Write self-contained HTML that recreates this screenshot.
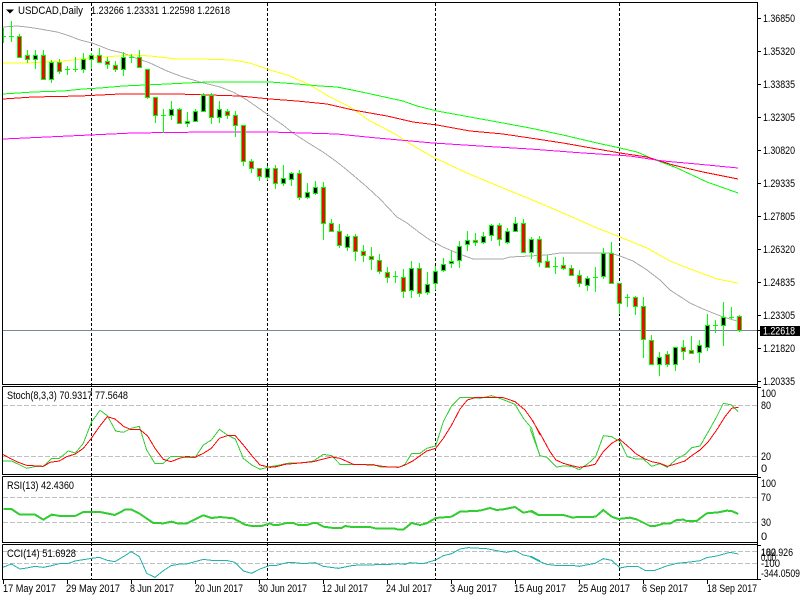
<!DOCTYPE html>
<html><head><meta charset="utf-8"><title>USDCAD,Daily</title>
<style>
html,body{margin:0;padding:0;background:#fff;width:800px;height:600px;overflow:hidden}
svg{display:block;position:absolute;left:0;top:0}
text{font-family:"Liberation Sans",sans-serif;font-size:11px;fill:#000}
.c{shape-rendering:crispEdges;fill:none}
</style></head><body>
<svg width="800" height="600" viewBox="0 0 800 600" xmlns="http://www.w3.org/2000/svg">
<rect width="800" height="600" fill="#fff"/>

<!-- level lines -->
<path class="c" stroke="#c0c0c0" stroke-dasharray="5 2" d="M3 405.5H757M3 456.5H757M3 497.5H757M3 522.5H757M3 551.5H757M3 563.5H757"/>
<!-- period separators -->
<path class="c" stroke="#000" stroke-dasharray="3 2" d="M91.5 3V579M267.5 3V579M435.5 3V579M619.5 3V579"/>
<!-- price line -->
<path class="c" stroke="#778899" d="M3 330.5H757"/>

<!-- moving averages -->
<polyline class="c" stroke="#a9a9a9" points="3,27 17,26 27,27 40,29 57,32 67,35 80,40 92,43 100,46 110,50 123,53 133,57 150,63 167,71 183,77 200,82 220,87 233,92 247,100 267,114 283,125 293,133 310,144 323,152 337,162 347,170 367,187 380,199 397,217 407,223 420,233 430,240 443,247 457,253 473,259 503,259 510,257 530,256 547,255 560,253 610,253 620,256 633,261 647,270 660,280 670,290 690,303 703,309 723,317 737,321"/>
<polyline class="c" stroke="#ffff00" points="3,63 27,63 63,61 90,58 117,56 133,55 150,56 177,59 200,59 233,60 250,63 270,70 290,76 310,85 330,97 350,107 370,121 397,135 407,142 433,157 467,173 503,188 530,199 563,213 597,228 620,237 647,248 670,261 690,269 717,279 738,283"/>
<polyline class="c" stroke="#00ff00" stroke-width="1" points="3,94 33,92 63,91 83,89 100,88 123,86 167,84 207,82 270,82 297,84 320,86 337,87 357,91 380,96 403,101 417,106 437,111 470,117 503,123 530,128 563,135 597,143 620,148 637,152 653,159 677,168 707,182 738,193"/>
<polyline class="c" stroke="#ff0000" stroke-width="1" points="3,99 33,97 80,96 120,94 177,94 240,96 270,99 297,101 327,104 353,110 387,116 413,122 437,125 470,131 503,134 530,138 563,143 597,149 620,153 647,157 673,165 703,172 738,179"/>
<polyline class="c" stroke="#ff00ff" stroke-width="1" points="3,139 47,137 90,135 133,133 207,132 270,132 337,134 377,138 433,143 480,146 530,149 583,153 630,156 663,161 697,164 738,168"/>

<!-- wicks -->
<path class="c" stroke="#00ff00" d="M3.5 28V43M11.5 21V42M19.5 34V57M27.5 50V63M35.5 50V69M43.5 50V80M51.5 60V83M59.5 59V74M67.5 66V75M75.5 57V72M83.5 53V73M91.5 53V69M99.5 48V63M107.5 57V69M115.5 61V72M123.5 52V76M131.5 54V63M139.5 50V68M147.5 69V99M155.5 97V123M163.5 109V133M171.5 101V120M179.5 108V123M187.5 112V127M195.5 109V122M203.5 93V112M211.5 93V124M219.5 101V123M227.5 109V119M235.5 111V137M243.5 125V166M251.5 159V173M259.5 168V181M267.5 166V180M275.5 165V189M283.5 165V186M291.5 172V186M299.5 170V200M307.5 183V199M315.5 181V195M323.5 182V240M331.5 219V231M339.5 224V248M347.5 234V251M355.5 234V261M363.5 245V262M371.5 247V270M379.5 254V274M387.5 267V283M395.5 271V283M403.5 269V298M411.5 261V298M419.5 263V297M427.5 272V295M435.5 266V290M443.5 258V272M451.5 251V268M459.5 241V268M467.5 231V251M475.5 233V246M483.5 232V244M491.5 224V241M499.5 223V246M507.5 228V244M515.5 217V232M523.5 219V253M531.5 237V259M539.5 236V267M547.5 255V267M555.5 257V274M563.5 257V270M571.5 265V276M579.5 270V287M587.5 276V291M595.5 267V292M603.5 248V279M611.5 242V283M619.5 283V314M627.5 294V307M635.5 296V315M643.5 297V358M651.5 335V365M659.5 352V376M667.5 351V367M675.5 347V371M683.5 340V360M691.5 336V353M699.5 340V363M707.5 314V351M715.5 320V333M723.5 302V346M731.5 307V319M739.5 315V332"/>
<!-- doji ticks -->
<path class="c" stroke="#00ff00" d="M3 36.5H6M9 36.5H14M65 69.5H70M73 69.5H78M129 57.5H134M161 115.5H166M393 276.5H398M553 266.5H558M593 277.5H598M625 297.5H630M713 325.5H718M729 317.5H734"/>
<!-- black bodies -->
<path class="c" style="fill:#000" stroke="#00ff00" d="M33.5 55.5h4V59.5h-4zM49.5 62.5h4V79.5h-4zM81.5 59.5h4V69.5h-4zM89.5 55.5h4V59.5h-4zM121.5 57.5h4V69.5h-4zM169.5 109.5h4V115.5h-4zM185.5 121.5h4V123.5h-4zM193.5 111.5h4V121.5h-4zM201.5 95.5h4V111.5h-4zM217.5 109.5h4V117.5h-4zM265.5 168.5h4V177.5h-4zM281.5 178.5h4V183.5h-4zM289.5 173.5h4V179.5h-4zM305.5 192.5h4V197.5h-4zM313.5 187.5h4V193.5h-4zM345.5 236.5h4V247.5h-4zM409.5 268.5h4V290.5h-4zM425.5 284.5h4V292.5h-4zM433.5 271.5h4V283.5h-4zM441.5 264.5h4V270.5h-4zM449.5 261.5h4V263.5h-4zM457.5 246.5h4V260.5h-4zM465.5 240.5h4V244.5h-4zM481.5 236.5h4V242.5h-4zM489.5 225.5h4V235.5h-4zM505.5 231.5h4V242.5h-4zM513.5 223.5h4V231.5h-4zM529.5 239.5h4V252.5h-4zM585.5 278.5h4V285.5h-4zM601.5 253.5h4V276.5h-4zM657.5 357.5h4V364.5h-4zM673.5 347.5h4V364.5h-4zM697.5 345.5h4V352.5h-4zM705.5 325.5h4V347.5h-4zM721.5 317.5h4V325.5h-4z"/>
<!-- red bodies -->
<path class="c" style="fill:#f00" stroke="#00ff00" d="M17.5 36.5h4V57.5h-4zM25.5 55.5h4V59.5h-4zM41.5 55.5h4V79.5h-4zM57.5 62.5h4V71.5h-4zM97.5 55.5h4V62.5h-4zM105.5 61.5h4V64.5h-4zM113.5 65.5h4V69.5h-4zM137.5 57.5h4V67.5h-4zM145.5 69.5h4V97.5h-4zM153.5 97.5h4V115.5h-4zM177.5 109.5h4V123.5h-4zM209.5 95.5h4V117.5h-4zM225.5 111.5h4V115.5h-4zM233.5 115.5h4V125.5h-4zM241.5 125.5h4V161.5h-4zM249.5 161.5h4V168.5h-4zM257.5 168.5h4V176.5h-4zM273.5 168.5h4V183.5h-4zM297.5 173.5h4V197.5h-4zM321.5 187.5h4V223.5h-4zM329.5 223.5h4V231.5h-4zM337.5 231.5h4V245.5h-4zM353.5 236.5h4V251.5h-4zM361.5 251.5h4V255.5h-4zM369.5 256.5h4V259.5h-4zM377.5 260.5h4V271.5h-4zM385.5 272.5h4V277.5h-4zM401.5 277.5h4V291.5h-4zM417.5 268.5h4V293.5h-4zM473.5 240.5h4V242.5h-4zM497.5 225.5h4V239.5h-4zM521.5 223.5h4V252.5h-4zM537.5 239.5h4V262.5h-4zM545.5 261.5h4V267.5h-4zM561.5 265.5h4V268.5h-4zM569.5 268.5h4V275.5h-4zM577.5 275.5h4V283.5h-4zM609.5 253.5h4V283.5h-4zM617.5 283.5h4V303.5h-4zM633.5 297.5h4V306.5h-4zM641.5 306.5h4V339.5h-4zM649.5 340.5h4V364.5h-4zM665.5 354.5h4V364.5h-4zM681.5 347.5h4V351.5h-4zM689.5 350.5h4V353.5h-4zM737.5 316.5h4V330.5h-4z"/>

<!-- indicators: left -->
<g transform="translate(0 385) scale(.33333)">
<polyline class="c" stroke="#32cd32" stroke-width="3" points="8,228 35,228 60,240 80,250 105,245 130,244 155,220 178,220 205,198 226,204 250,175 275,110 300,76 322,92 347,138 370,142 394,130 418,124 440,195 465,236 490,235 513,214 540,214 560,218 585,218 610,180 634,165 658,133 682,150 706,162 730,220 755,240 780,253 810,245"/>
<polyline class="c" stroke="#ff0000" stroke-width="3" points="8,208 30,220 55,232 80,241 130,244 150,232 178,228 200,215 226,207 250,190 274,160 298,125 322,95 345,102 372,125 394,134 420,134 443,153 465,190 490,223 513,230 538,220 560,214 585,217 610,205 634,190 658,160 682,152 705,151 730,180 754,210 780,240 810,247"/>
<polyline class="c" stroke="#32cd32" stroke-width="6" points="10,372 34,372 58,388 105,389 130,404 155,389 180,393 225,393 250,381 300,381 345,390 375,374 395,374 420,387 460,414 490,415 515,410 535,416 560,416 610,391 635,399 660,396 700,400 735,419 755,423 785,423 810,415"/>
<polyline class="c" stroke="#20b2aa" stroke-width="3" points="8,547 34,537 60,552 80,549 105,544 130,547 155,542 178,536 205,535 225,528 250,524 275,520 298,517 322,526 345,530 370,515 394,500 418,515 440,565 465,577 490,557 513,542 540,537 560,537 585,530 610,523 634,526 682,527 705,532 730,558 755,565 780,552 810,541"/>
</g>
<!-- indicators: middle -->
<g transform="translate(270 385) scale(.33333)">
<polyline class="c" stroke="#32cd32" stroke-width="3" points="0,245 30,240 50,235 100,233 130,228 160,208 185,212 210,238 270,238 310,238 330,246 390,246 405,238 425,205 450,205 470,190 497,183 520,110 545,62 570,37 605,37 630,40 665,32 695,42 735,58 760,100 785,130 810,215"/>
<polyline class="c" stroke="#ff0000" stroke-width="3" points="0,247 20,245 45,238 100,233 130,230 160,222 185,216 210,220 250,238 310,240 345,245 385,247 405,240 430,227 470,198 497,190 520,160 545,120 570,72 592,45 615,38 670,37 700,38 735,50 765,75 790,110 810,150"/>
<polyline class="c" stroke="#32cd32" stroke-width="6" points="0,415 10,420 25,420 50,414 70,414 85,420 110,420 130,414 140,414 160,425 190,429 215,429 225,423 245,426 300,426 320,431 375,431 385,434 400,434 425,414 450,420 470,415 497,399 545,395 570,380 630,377 660,369 680,375 700,373 735,366 760,383 785,378 810,392"/>
<polyline class="c" stroke="#20b2aa" stroke-width="3" points="0,541 20,541 50,533 75,533 100,536 135,533 160,544 205,550 250,541 360,538 385,536 405,538 420,533 460,536 497,525 520,512 545,506 570,492 595,488 650,491 680,497 710,502 735,497 760,510 785,515 810,527"/>
</g>
<!-- indicators: right -->
<g transform="translate(530 385) scale(.33333)">
<polyline class="c" stroke="#32cd32" stroke-width="3" points="0,130 30,212 50,217 80,246 100,243 125,244 148,254 175,235 197,215 220,152 245,155 270,170 292,215 318,222 340,222 365,244 390,236 412,247 440,222 465,208 485,188 510,183 535,140 560,95 580,55 605,60 625,80"/>
<polyline class="c" stroke="#ff0000" stroke-width="3" points="0,95 30,145 60,200 78,225 100,235 125,242 148,247 175,243 195,238 220,200 245,175 268,162 295,185 320,208 345,222 365,230 390,235 412,244 440,236 465,228 485,212 510,195 535,170 560,135 585,95 605,70 625,67"/>
<polyline class="c" stroke="#32cd32" stroke-width="6" points="0,378 25,390 100,390 125,397 175,396 197,395 220,375 245,395 265,402 300,398 320,403 360,423 375,423 400,416 420,416 440,405 460,404 470,408 500,408 530,385 565,382 590,377 605,378 625,387"/>
<polyline class="c" stroke="#20b2aa" stroke-width="3" points="0,515 25,528 50,538 75,541 125,541 148,544 195,535 220,521 245,526 270,549 290,545 325,545 345,556 375,556 410,543 440,535 480,531 510,527 530,518 560,513 600,502 625,507"/>
</g>

<!-- frames -->
<path class="c" stroke="#000" d="M2.5 2.5H757.5V580M2.5 2.5V384.5H757.5M2.5 386.5H757.5M2.5 386.5V474.5H757.5M2.5 476.5H757.5M2.5 476.5V542.5H757.5M2.5 544.5H757.5M2.5 544.5V579.5H757.5"/>
<!-- right ticks -->
<path class="c" stroke="#000" d="M757 18.5H761M757 51.5H761M757 84.5H761M757 117.5H761M757 150.5H761M757 183.5H761M757 216.5H761M757 249.5H761M757 282.5H761M757 315.5H761M757 348.5H761M757 381.5H761M757 330.5H761M757 387.5H761M757 477.5H761M757 545.5H761M757 579.5H761"/>
<!-- bottom ticks -->
<path class="c" stroke="#000" d="M3.5 580V584M67.5 580V584M131.5 580V584M195.5 580V584M259.5 580V584M323.5 580V584M387.5 580V584M451.5 580V584M515.5 580V584M579.5 580V584M643.5 580V584M707.5 580V584"/>

<!-- title -->
<path d="M6 9.5H14L10 13.5Z" fill="#000"/>
<text x="18" y="14" textLength="65" lengthAdjust="spacingAndGlyphs">USDCAD,Daily</text>
<text x="91" y="14" textLength="139" lengthAdjust="spacingAndGlyphs" xml:space="preserve">1.23266 1.23331 1.22598 1.22618</text>

<!-- price axis -->
<g>
<text x="763" y="22" textLength="32" lengthAdjust="spacingAndGlyphs">1.36850</text>
<text x="763" y="55" textLength="32" lengthAdjust="spacingAndGlyphs">1.35320</text>
<text x="763" y="88" textLength="32" lengthAdjust="spacingAndGlyphs">1.33835</text>
<text x="763" y="121" textLength="32" lengthAdjust="spacingAndGlyphs">1.32305</text>
<text x="763" y="154" textLength="32" lengthAdjust="spacingAndGlyphs">1.30820</text>
<text x="763" y="187" textLength="32" lengthAdjust="spacingAndGlyphs">1.29335</text>
<text x="763" y="220" textLength="32" lengthAdjust="spacingAndGlyphs">1.27805</text>
<text x="763" y="253" textLength="32" lengthAdjust="spacingAndGlyphs">1.26320</text>
<text x="763" y="286" textLength="32" lengthAdjust="spacingAndGlyphs">1.24835</text>
<text x="763" y="319" textLength="32" lengthAdjust="spacingAndGlyphs">1.23305</text>
<text x="763" y="352" textLength="32" lengthAdjust="spacingAndGlyphs">1.21820</text>
<text x="763" y="385" textLength="32" lengthAdjust="spacingAndGlyphs">1.20335</text>
</g>
<rect x="760" y="326" width="40" height="10" fill="#000"/>
<text x="763" y="334.5" textLength="32" lengthAdjust="spacingAndGlyphs" style="fill:#fff">1.22618</text>

<!-- indicator labels -->
<text x="7" y="399" textLength="121" lengthAdjust="spacingAndGlyphs">Stoch(8,3,3) 70.9317 77.5648</text>
<text x="7" y="489" textLength="67" lengthAdjust="spacingAndGlyphs">RSI(13) 42.4360</text>
<text x="7" y="557" textLength="69" lengthAdjust="spacingAndGlyphs">CCI(14) 51.6928</text>

<!-- indicator axes -->
<text x="761" y="397" textLength="15" lengthAdjust="spacingAndGlyphs">100</text>
<text x="761" y="409" textLength="10" lengthAdjust="spacingAndGlyphs">80</text>
<text x="761" y="460" textLength="10" lengthAdjust="spacingAndGlyphs">20</text>
<text x="761" y="472">0</text>
<text x="761" y="487" textLength="15" lengthAdjust="spacingAndGlyphs">100</text>
<text x="761" y="501" textLength="10" lengthAdjust="spacingAndGlyphs">70</text>
<text x="761" y="526" textLength="10" lengthAdjust="spacingAndGlyphs">30</text>
<text x="761" y="540">0</text>
<text x="761" y="556" textLength="32" lengthAdjust="spacingAndGlyphs">182.926</text>
<text x="761" y="556" textLength="15" lengthAdjust="spacingAndGlyphs">100</text>
<text x="761" y="561" textLength="15" lengthAdjust="spacingAndGlyphs">0.00</text>
<text x="761" y="567" textLength="19" lengthAdjust="spacingAndGlyphs">-100</text>
<text x="761" y="577" textLength="39" lengthAdjust="spacingAndGlyphs">-344.0509</text>

<!-- date axis -->
<text x="3" y="592" textLength="53" lengthAdjust="spacingAndGlyphs">17 May 2017</text>
<text x="66" y="592" textLength="54" lengthAdjust="spacingAndGlyphs">29 May 2017</text>
<text x="130" y="592" textLength="44" lengthAdjust="spacingAndGlyphs">8 Jun 2017</text>
<text x="195" y="592" textLength="48" lengthAdjust="spacingAndGlyphs">20 Jun 2017</text>
<text x="258" y="592" textLength="49" lengthAdjust="spacingAndGlyphs">30 Jun 2017</text>
<text x="322" y="592" textLength="46" lengthAdjust="spacingAndGlyphs">12 Jul 2017</text>
<text x="386" y="592" textLength="46" lengthAdjust="spacingAndGlyphs">24 Jul 2017</text>
<text x="450" y="592" textLength="47" lengthAdjust="spacingAndGlyphs">3 Aug 2017</text>
<text x="514" y="592" textLength="52" lengthAdjust="spacingAndGlyphs">15 Aug 2017</text>
<text x="578" y="592" textLength="52" lengthAdjust="spacingAndGlyphs">25 Aug 2017</text>
<text x="642" y="592" textLength="46" lengthAdjust="spacingAndGlyphs">6 Sep 2017</text>
<text x="707" y="592" textLength="50" lengthAdjust="spacingAndGlyphs">18 Sep 2017</text>
</svg>
</body></html>
